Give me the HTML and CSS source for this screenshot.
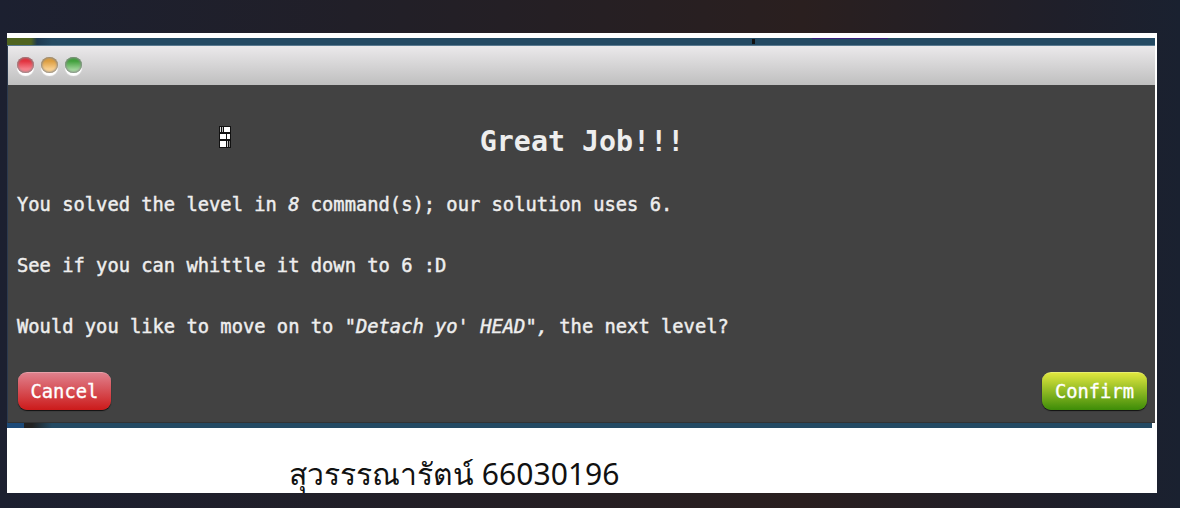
FILE: index.html
```html
<!DOCTYPE html>
<html lang="en">
<head>
  <meta charset="UTF-8">
  <title>Great Job</title>
  <link rel="stylesheet" href="styles.css">
</head>
<body>

<div class="sheet">
  <div class="strip strip-top">
    <span class="strip-mark"></span>
    <span class="strip-purple"></span>
  </div>

  <div class="dialog">
    <!-- Window bar -->
    <div class="titlebar">
      <span class="dot dot-red"></span>
      <span class="dot dot-yellow"></span>
      <span class="dot dot-green"></span>
    </div>

    <div class="content">
      <div class="heading">
        <svg class="glitch" width="12" height="22" viewBox="0 0 12 22">
          <rect width="12" height="22" fill="#111"/>
          <rect x="1" y="1" width="1" height="5" fill="#ddd"/>
          <rect x="3" y="1" width="1" height="5" fill="#bbb"/>
          <rect x="5" y="1" width="6" height="5" fill="#fff"/>
          <rect x="1" y="8" width="6" height="5" fill="#fff"/>
          <rect x="8" y="8" width="3" height="5" fill="#fff"/>
          <rect x="1" y="15" width="6" height="6" fill="#fff"/>
          <rect x="8" y="15" width="1" height="6" fill="#ccc"/>
          <rect x="10" y="15" width="1" height="6" fill="#888"/>
        </svg>
        <h2 class="title">Great Job!!!</h2>
      </div>
      <p>You solved the level in <em>8</em> command(s); our solution uses 6.</p>
      <p>See if you can whittle it down to 6 :D</p>
      <p>Would you like to move on to <em>"Detach yo' HEAD",</em> the next level?</p>
      <div class="actions">
        <button class="btn btn-cancel">Cancel</button>
        <button class="btn btn-confirm">Confirm</button>
      </div>
    </div>
  </div>

  <div class="strip strip-bottom"></div>

  <div class="caption">สุวรรรณารัตน์ 66030196</div>
</div>

</body>
</html>
```

FILE: styles.css
```css
/* Page backdrop */
html, body {
  height: 100%;
}
body {
  margin: 0;
  padding: 33px 23px 15px 7px;
  box-sizing: border-box;
  overflow: hidden;
  background: linear-gradient(90deg, #1c2030 0%, #211f28 30%, #2a1f1f 68%, #1f1f2a 90%, #1a2130 100%);
}
.sheet {
  height: 460px;
  background-color: #fff;
  padding-top: 5px;
  box-sizing: border-box;
  overflow: hidden;
}

/* Bits of the page behind the dialog */
.strip {
  margin-right: 2px;
}
.strip-top {
  position: relative;
  height: 8px;
  background: linear-gradient(90deg, #4f6420 0 24px, #1f3a50 30px, #244a63 45px);
  border-bottom: 1px solid #5a7a90;
  box-sizing: border-box;
}
.strip-mark {
  position: absolute;
  left: 745px;
  top: 1px;
  width: 3px;
  height: 5px;
  background-color: #111;
}
.strip-purple {
  position: absolute;
  left: 805px;
  top: 0;
  width: 76px;
  height: 1px;
  background-color: #3a1f80;
}
.strip-bottom {
  height: 5px;
  margin-right: 5px;
  background: linear-gradient(90deg, #1d4a78 0 17px, #222 17px 25px, #244a63 45px);
}

/* Dialog */
.dialog {
  margin-right: 2px;
  border-left: 1px solid #2c3a4e;
  font-family: "DejaVu Sans Mono", monospace;
  color: #eee;
}
.titlebar {
  height: 39px;
  display: flex;
  align-items: center;
  gap: 7px;
  padding-left: 9px;
  background: linear-gradient(180deg, #ebe9eb, #bfbfbf);
}
.dot {
  width: 17px;
  height: 16px;
  margin-top: -2px;
  border-radius: 50%;
  box-shadow: 0 3px 1px #fff, inset 0 0 2px 1px #8a8a8a;
}
.dot-red {
  background: linear-gradient(180deg, #e2323e 25%, #f5808a 75%);
}
.dot-yellow {
  background: linear-gradient(180deg, #dc9d3f 25%, #f8cf8f 75%);
}
.dot-green {
  background: linear-gradient(180deg, #41a03c 25%, #a2d59c 80%);
}
.content {
  height: 338px;
  box-sizing: border-box;
  background-color: #424242;
  border-bottom: 1px solid #333;
  padding: 0 8px 0 9px;
  display: flex;
  flex-direction: column;
}
.heading {
  height: 109px;
  display: flex;
  justify-content: center;
  padding-top: 41px;
  box-sizing: border-box;
}
.glitch {
  position: absolute;
  left: 219px;
  top: 126px;
}
.title {
  margin: 0;
  font-size: 28.3px;
  line-height: 32px;
  color: #eee;
}
.content p {
  margin: 0 0 39px;
  font-size: 18.78px;
  line-height: 22px;
  white-space: pre;
  -webkit-text-stroke: 0.45px #eee;
}
.actions {
  display: flex;
  justify-content: space-between;
  margin-top: -5px;
  padding-left: 1px;
}
.btn {
  height: 38px;
  padding: 0 12.5px;
  border: none;
  border-top: 1px solid #e8a0a8;
  border-radius: 9px;
  color: #fff;
  font-family: "DejaVu Sans Mono", monospace;
  font-size: 18.78px;
  -webkit-text-stroke: 0.35px #fff;
  box-shadow: 0 1px 1px #111;
}
.btn-cancel {
  background: linear-gradient(180deg, #e0808c, #cc1a1a);
}
.btn-confirm {
  padding: 0 13px;
  border-top-color: #e8ee70;
  background: linear-gradient(180deg, #dfe63e, #3d8c08);
}

/* Thai caption */
.caption {
  padding: 26px 0 0 282px;
  font-family: "Noto Sans", "DejaVu Sans", sans-serif;
  font-size: 30.1px;
  line-height: 40px;
  color: #111;
}
```
